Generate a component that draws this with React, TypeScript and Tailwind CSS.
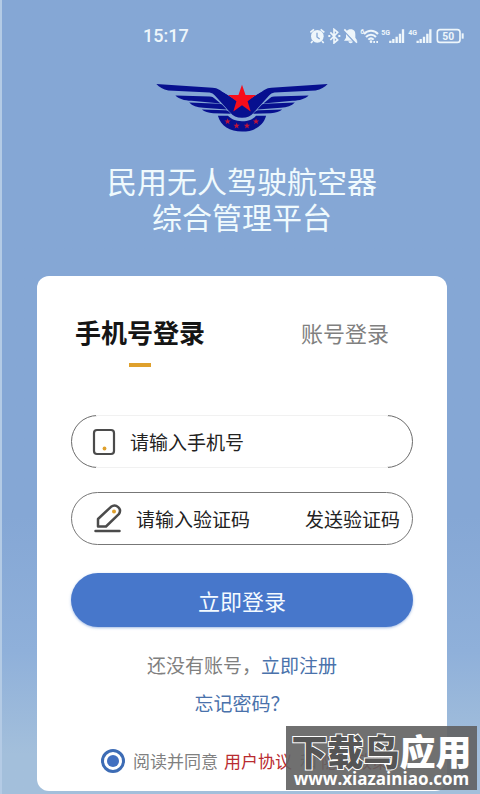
import { useState } from 'react';

function StatusIcons() {
  return (
    <svg className="h-4 w-[154px] shrink-0" viewBox="60 37 462 48" fill="none" stroke="#eef6fb" aria-hidden="true">
      {/* Alarm */}
      <circle cx="82" cy="62" r="19" fill="#eef6fb" stroke="none" />
      <path d="M61 50l11-9M92 41l11 9M68 76l-5 6M96 76l5 6" strokeWidth="5" />
      <path d="M81 51v13l8 6" stroke="#85a7d5" strokeWidth="4" />
      {/* Bluetooth */}
      <path d="M121 50l22 23-11 9V41l11 9-22 23" strokeWidth="5" />
      <path d="M115 61h6M145 61h6" strokeWidth="6" />
      {/* Muted bell */}
      <path d="M182 41c-11 0-14 7-14 15v10l-6 9h40l-6-9V56c0-8-3-15-14-15zM175 77h14c-1 8-13 8-14 0z" fill="#eef6fb" stroke="none" />
      <path d="M163 46l34 37" stroke="#85a7d5" strokeWidth="5" />
      <path d="M163 41l38 40" strokeWidth="5" />
      {/* Wifi */}
      <path d="M222 55c11-13 31-13 42 0M228 64c8-9 22-9 30 0M235 72c5-5 11-5 16 0" strokeWidth="6" />
      <circle cx="243" cy="78" r="4" fill="#eef6fb" stroke="none" />
      <path d="M250 79h5M259 79h5" strokeWidth="6" />
      {/* Signal bars */}
      <path d="M301 75v7M310 70v12M320 63v19M330 54v28M339 41v41" strokeWidth="7" />
      <path d="M383 75v7M392 70v12M402 63v19M412 54v28M421 41v41" strokeWidth="7" />
      {/* Battery */}
      <rect x="442" y="42" width="68" height="38" rx="8" strokeWidth="5" />
      <path d="M518 53v16" strokeWidth="6" />
      <g fill="#eef6fb" stroke="none" className="font-['Roboto',sans-serif] font-bold">
        <text x="211" y="56" fontSize="21">6</text>
        <text x="274" y="57" fontSize="21">5G</text>
        <text x="355" y="57" fontSize="21">4G</text>
        <text x="457" y="72" fontSize="31">50</text>
      </g>
    </svg>
  );
}

const STAR = '0,-10 2.4,-3.1 9.5,-3.1 3.8,1.2 5.9,8.1 0,3.9 -5.9,8.1 -3.8,1.2 -9.5,-3.1 -2.4,-3.1';

function Wing() {
  return (
    <>
      <path d="M30 30l168 11c8 0 14 2 20 6l68 40v44c-16 0-27-6-36-17l-45-50c-4-5-9-8-16-9L66 49C50 46 39 40 30 30z" />
      <path d="M87 64l103 3c7 0 10 2 14 6l18 15-87-8c-22-1-38-6-48-16z" />
      <path d="M128 85l90 4c6 0 9 2 12 6l10 11-70-5c-19-1-32-6-42-16z" />
      <path d="M166 106l68 2c6 0 9 1 12 4l7 7-53-2c-15-1-26-4-34-11z" />
      <path d="M214 125h30c11 10 22 16 42 16v31c-36 0-64-17-72-47z" />
    </>
  );
}

function Logo() {
  return (
    <svg className="h-12 w-[172px]" viewBox="29 30 514 143" role="img" aria-label="民用无人驾驶航空器综合管理平台">
      <g fill="#07108f">
        <Wing />
        <g transform="translate(572 0) scale(-1 1)">
          <Wing />
        </g>
      </g>
      {/* Notch behind the star */}
      <path d="M222 49l64 40 64-40z" fill="#85a7d5" />
      <polygon points={STAR} transform="translate(286 76) scale(4.4)" fill="#f80d1b" />
      <g fill="#c0143a">
        <polygon points={STAR} transform="translate(243 142)" />
        <polygon points={STAR} transform="translate(270 155)" />
        <polygon points={STAR} transform="translate(301 155)" />
        <polygon points={STAR} transform="translate(328 142)" />
      </g>
    </svg>
  );
}

function PhoneIcon() {
  return (
    <svg className="h-7 w-6 shrink-0" viewBox="0 0 24 28" fill="none" aria-hidden="true">
      <rect x="2" y="2" width="20" height="24" rx="3" stroke="#4b4b4b" strokeWidth="2.2" />
      <circle cx="12.5" cy="20.5" r="1.9" fill="#dfa02c" />
    </svg>
  );
}

function PencilIcon() {
  return (
    <svg className="h-[29px] w-7 shrink-0" viewBox="0 0 28 29" fill="none" stroke="#4b4b4b" strokeWidth="2.5" aria-hidden="true">
      <path d="M4 22.5v-7.5L17 2.8c5-3.6 11.500 2 7.800 7.400L12 22.500z" strokeLinejoin="round" />
      <path d="M1.500 27h24" strokeLinecap="round" />
      <circle cx="20" cy="7.500" r="2" fill="#dfa02c" stroke="none" />
    </svg>
  );
}

export default function App() {
  const [tab, setTab] = useState('phone');
  const [phone, setPhone] = useState('');
  const [code, setCode] = useState('');

  return (
    <div className="relative min-h-screen border-l-2 border-[#b4cbe5] bg-linear-to-b from-[#85a7d5] from-65% via-[#8fb0da] via-82% to-[#a3bfdb] to-95% font-['Noto_Sans_CJK_SC',sans-serif]">
      <header className="flex h-[72px] items-center justify-between pr-4 pl-[141px]">
        <time className="font-['Roboto','Noto_Sans_CJK_SC',sans-serif] text-lg font-medium text-[#eef6fb]">15:17</time>
        <StatusIcons />
      </header>

      <main className="pr-[33px] pb-[3px] pl-[35px]">
        <div className="mt-3 flex flex-col items-center">
          <Logo />
          <h1 className="mt-[30px] text-center text-[30px] leading-9 font-normal text-[#f0fafd]">
            民用无人驾驶航空器
            <br />
            综合管理平台
          </h1>
        </div>

        <section className="mt-[42px] rounded-xl bg-white px-[34px] pt-[38px] pb-[18px]">
          {/* Login tabs */}
          <div role="tablist" className="flex items-start justify-between pr-6 pl-1">
            <button
              type="button"
              role="tab"
              aria-selected={tab === 'phone'}
              onClick={() => setTab('phone')}
              className="flex flex-col items-center text-[26px] leading-9 font-bold text-[#151515]"
            >
              手机号登录
              <span className="mt-[13px] h-1 w-[22px] bg-[#dfa02c]" />
            </button>
            <button
              type="button"
              role="tab"
              aria-selected={tab === 'account'}
              onClick={() => setTab('account')}
              className="text-[22px] leading-9 text-[#808080]"
            >
              账号登录
            </button>
          </div>

          <form className="mt-12" onSubmit={(e) => e.preventDefault()}>
            <div className="relative flex h-[53px] items-center rounded-full border border-[#6b6b6b] pr-3 pl-5 before:pointer-events-none before:absolute before:inset-x-6 before:-inset-y-px before:border-y before:border-[#f1f1f1]">
              <PhoneIcon />
              <input
                type="tel"
                aria-label="手机号"
                placeholder="请输入手机号"
                value={phone}
                onChange={(e) => setPhone(e.target.value)}
                className="ml-[14px] min-w-0 flex-1 text-[19px] leading-7 text-[#222] outline-none placeholder:text-[#222]"
              />
            </div>

            <div className="mt-6 flex h-[53px] items-center rounded-full border border-[#777] pr-3 pl-[22px]">
              <PencilIcon />
              <input
                type="text"
                aria-label="验证码"
                placeholder="请输入验证码"
                value={code}
                onChange={(e) => setCode(e.target.value)}
                className="ml-[14px] min-w-0 flex-1 text-[19px] leading-7 text-[#222] outline-none placeholder:text-[#222]"
              />
              <button type="button" className="shrink-0 text-[19px] leading-7 text-[#222]">
                发送验证码
              </button>
            </div>

            <button
              type="submit"
              className="mt-7 h-[54px] w-full rounded-full bg-[#4777cb] text-[22px] leading-8 text-[#f4faff] shadow-sm shadow-[#4777cb]/40"
            >
              立即登录
            </button>
          </form>

          <p className="mt-6 text-center text-[19px] leading-7 text-[#808080]">
            还没有账号，<a href="#register" className="text-[#4a72ab]">立即注册</a>
          </p>
          <p className="mt-[10px] text-center text-[19px] leading-7">
            <a href="#forgot" className="text-[#4a72ab]">忘记密码？</a>
          </p>

          {/* Agreement */}
          <div className="mt-8 flex items-center pl-[30px] text-[17px] leading-6 whitespace-nowrap text-[#808080]">
            <input
              id="agree"
              type="radio"
              defaultChecked
              className="size-6 shrink-0 appearance-none rounded-full border-3 border-[#3d6cb5] bg-white bg-clip-content p-[3px] checked:bg-[#4270c0]"
            />
            <label htmlFor="agree" className="ml-2">阅读并同意</label>
            <a href="#terms" className="ml-[6px] text-[#b92b30]">用户协议</a>
            <span className="ml-2">和</span>
            <a href="#privacy" className="ml-1 text-[#b92b30]">隐私政策</a>
          </div>
        </section>
      </main>

      {/* Site badge */}
      <div className="absolute right-[3px] bottom-1 flex h-16 w-[191px] flex-col items-center bg-[#606060]/90 text-white">
        <div className="mt-1.5 text-[36px] leading-9 font-black whitespace-nowrap">
          <span className="text-[#555] [paint-order:stroke] [-webkit-text-stroke:2px_#fff]">下载鸟</span>应用
        </div>
        <div className="mt-[3px] font-['Open_Sans',sans-serif] text-[17px] leading-4 font-bold">www.xiazainiao.com</div>
      </div>
    </div>
  );
}
